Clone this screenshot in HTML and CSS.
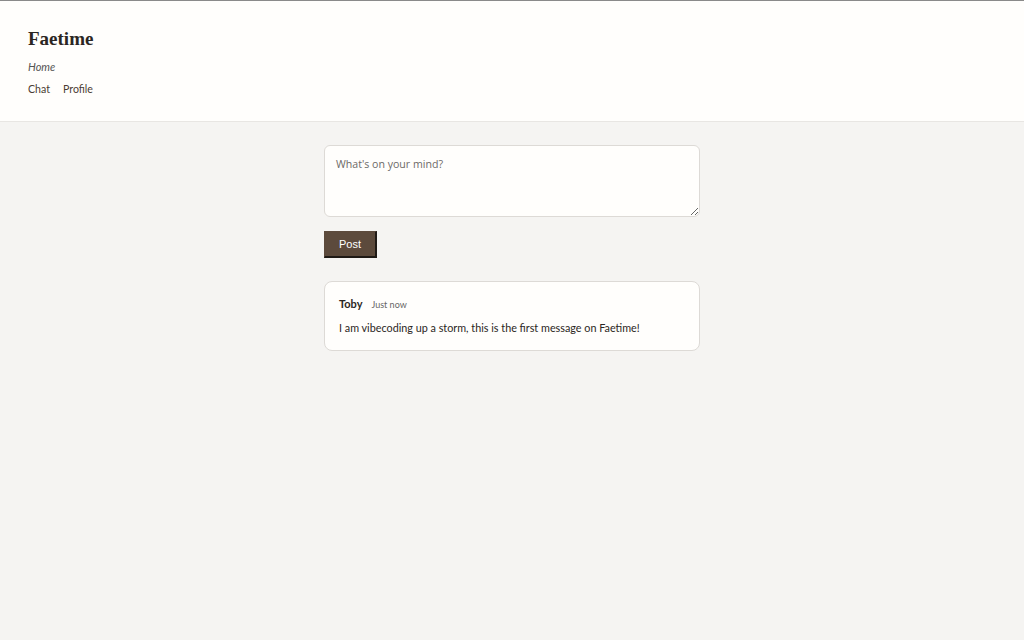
FILE: index.html
```html
<!DOCTYPE html>
<html>
<head>
<meta charset="utf-8">
<link rel="stylesheet" href="styles.css">
</head>
<body>
<header class="site-header">
  <h1 class="brand">Faetime</h1>
  <div class="crumb">Home</div>
  <nav class="nav">
    <a href="#">Chat</a>
    <a href="#">Profile</a>
  </nav>
</header>
<main class="feed">
  <form class="composer">
    <textarea class="composer-input" placeholder="What's on your mind?"></textarea>
    <div class="composer-actions"><button type="button" class="post-btn">Post</button></div>
  </form>
  <article class="post">
    <div class="post-meta"><span class="author">Toby</span><span class="time">Just now</span></div>
    <p class="post-body">I am vibecoding up a storm, this is the first message on Faetime!</p>
  </article>
</main>
</body>
</html>
```
FILE: styles.css
```css
html, body { margin: 0; padding: 0; }
body {
  background: #f5f4f2;
  font-family: Lato, "Open Sans", sans-serif;
  color: #2b2623;
  border-top: 1px solid #8a8a8a;
  min-height: 639px;
}
.site-header {
  background: #fffefc;
  border-bottom: 1px solid #e8e6e3;
  padding: 27px 28px 25px;
}
.brand {
  margin: 0;
  font-family: "Liberation Serif", serif;
  font-weight: bold;
  font-size: 19px;
  line-height: 22px;
  color: #2b2623;
}
.crumb {
  margin-top: 10px;
  font-style: italic;
  font-size: 11px;
  line-height: 14px;
  color: #555;
}
.nav {
  margin-top: 8px;
  display: flex;
  gap: 13px;
}
.nav a {
  font-size: 10.6px;
  line-height: 14px;
  color: #4a3c33;
  text-decoration: none;
}
.feed {
  width: 376px;
  margin: 23px auto 0;
}
.composer { margin: 0; }
.composer-input {
  display: block;
  box-sizing: border-box;
  width: 376px;
  height: 72px;
  border: 1px solid #dddad6;
  border-radius: 6px;
  background: #fffefc;
  padding: 11px 11px;
  font-family: "Open Sans", sans-serif;
  font-size: 10.6px;
  resize: vertical;
}
.composer-input::placeholder { color: #6d6a67; }
.composer-actions { margin-top: 14px; }
.post-btn {
  display: block;
  width: 53px;
  height: 27px;
  background: #5c4a3c;
  color: #fff;
  font-family: "Liberation Sans", Arial, sans-serif;
  font-size: 11px;
  border: 1px solid #5c4a3c;
  border-right: 2px solid #1f1a16;
  border-bottom: 2px solid #1f1a16;
  padding: 0;
  cursor: pointer;
}
.post {
  margin-top: 23px;
  box-sizing: border-box;
  background: #fffefc;
  border: 1px solid #dddad6;
  border-radius: 8px;
  padding: 15px 14px 14px;
  height: 70px;
}
.post-meta { display: flex; align-items: baseline; gap: 9px; }
.author { font-weight: bold; font-size: 11px; color: #2b2623; }
.time { font-size: 9px; color: #666; }
.post-body {
  margin: 10px 0 0;
  font-size: 10.8px;
  line-height: 15px;
  color: #2b2623;
}
```
